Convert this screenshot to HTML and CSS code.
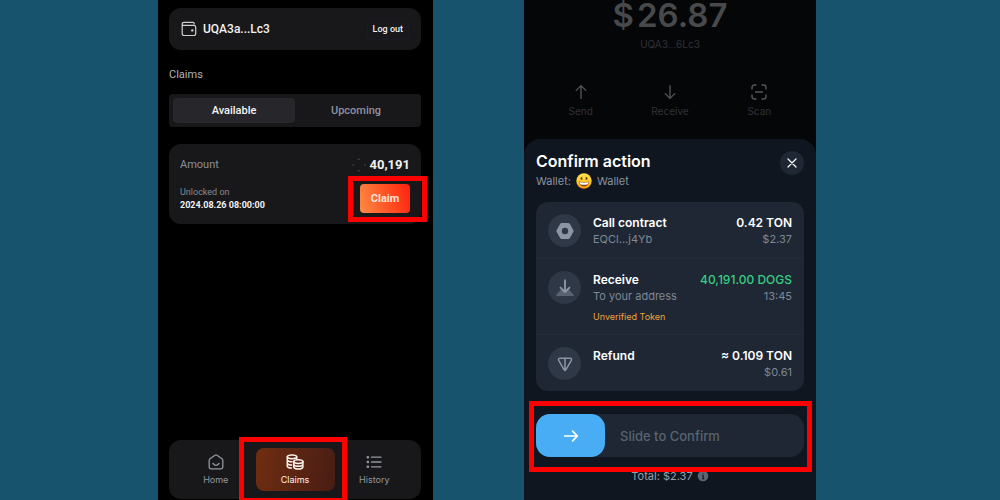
FILE: index.html
```html
<!DOCTYPE html>
<html lang="en">
<head>
<meta charset="utf-8">
<meta name="viewport" content="width=device-width, initial-scale=1">
<title>Claim and confirm</title>
<link rel="stylesheet" href="styles.css">
</head>
<body>
<main class="stage">
  <section class="phone claims-app" aria-label="Claims">
    <header class="wallet-bar">
      <svg class="wallet-icon" viewBox="0 0 16 16" fill="none" stroke="currentColor" stroke-width="1.2" stroke-linecap="round" stroke-linejoin="round"><path d="M13.2 2.9V2.6Q13.2 1.3 11.9 1.3H3Q1.2 1.3 1.2 3.1V12.4Q1.2 14.5 3.3 14.5H12.6Q14.7 14.5 14.7 12.4V6.3Q14.7 4.4 12.7 4.4H2.6Q1.2 4.4 1.2 3.1"/><circle cx="11.3" cy="9.4" r=".6" fill="currentColor"/></svg>
      <span class="wallet-name">UQA3a...Lc3</span>
      <button class="logout" type="button">Log out</button>
    </header>
    <h2 class="section-title">Claims</h2>
    <div class="tabs">
      <button class="tab tab-active" type="button">Available</button>
      <button class="tab" type="button">Upcoming</button>
    </div>
    <article class="claim-card">
      <div class="claim-row">
        <span class="amount-label">Amount</span>
        <span class="amount"><svg class="token" viewBox="0 0 14 14" fill="none" stroke="currentColor" stroke-width="1"><path d="M5.5 1.2H8M5.5 12.8H8M1.2 6V8M12.8 6V8"/></svg>40,191</span>
      </div>
      <div class="claim-row">
        <div class="unlock"><span class="unlock-label">Unlocked on</span><time class="unlock-date">2024.08.26 08:00:00</time></div>
        <div class="marked"><button class="claim-button" type="button">Claim</button><span class="marker marker-claim"></span></div>
      </div>
    </article>
    <nav class="tabbar">
      <a class="nav-item" href="#home">
        <svg class="nav-icon" viewBox="0 0 16 16" fill="none" stroke="currentColor" stroke-width="1.3" stroke-linecap="round" stroke-linejoin="round"><path d="M1.2 6.2Q1.2 5.4 2 4.8L7 1.2Q8 .5 9 1.2L14 4.8Q14.8 5.4 14.8 6.2V13Q14.8 14.8 13 14.8H3Q1.2 14.8 1.2 13ZM5 9.5Q8 13.3 11 9.5"/></svg>Home</a>
      <div class="marked">
        <a class="nav-item nav-active" href="#claims">
          <svg class="nav-icon nav-icon-wide" viewBox="0 0 18 16" fill="none" stroke="currentColor" stroke-width="1.5" stroke-linecap="round"><ellipse cx="6" cy="2.8" rx="4.7" ry="1.9"/><path d="M1.3 2.8V12.4Q1.8 13.8 5.4 14M10.7 2.8V4.8M1.3 6Q2 7.8 6 7.8M1.3 9.2Q2 11 5.6 11"/><ellipse cx="12.3" cy="7.6" rx="4.6" ry="1.9"/><path d="M7.7 7.6V13Q8.4 15.1 12.3 15.1T16.9 13V7.6M7.7 10.4Q8.4 12.3 12.3 12.3T16.9 10.4"/></svg>Claims</a>
        <span class="marker marker-nav"></span>
      </div>
      <a class="nav-item" href="#history">
        <svg class="nav-icon" viewBox="0 0 16 16" fill="none" stroke="currentColor" stroke-width="1.3" stroke-linecap="round"><path d="M5.5 3.2H15M5.5 8H15M5.5 12.8H15"/><path d="M1.7 3.2H2M1.7 8H2M1.7 12.8H2" stroke-width="2.4"/></svg>History</a>
    </nav>
  </section>

  <section class="phone wallet-app" aria-label="Wallet">
    <div class="balance">
      <p class="total-balance"><span class="currency">$</span>26.87</p>
      <p class="address">UQA3...6Lc3</p>
      <div class="quick-actions">
        <button class="quick" type="button"><svg class="quick-icon" viewBox="0 0 16 16" fill="none" stroke="currentColor" stroke-width="1.3" stroke-linecap="round" stroke-linejoin="round"><path d="M8 14.4V1.6M3.2 6.4L8 1.6L12.8 6.4"/></svg>Send</button>
        <button class="quick" type="button"><svg class="quick-icon" viewBox="0 0 16 16" fill="none" stroke="currentColor" stroke-width="1.3" stroke-linecap="round" stroke-linejoin="round"><path d="M8 1.6V14.4M3.2 9.6L8 14.4L12.8 9.6"/></svg>Receive</button>
        <button class="quick" type="button"><svg class="quick-icon" viewBox="0 0 16 16" fill="none" stroke="currentColor" stroke-width="1.4" stroke-linecap="round"><path d="M1 5V3.6Q1 1 3.6 1H5M11 1H12.4Q15 1 15 3.6V5M15 11V12.4Q15 15 12.4 15H11M5 15H3.6Q1 15 1 12.4V11M4.5 8H11.5"/></svg>Scan</button>
      </div>
    </div>

    <div class="sheet">
      <header class="sheet-head">
        <div>
          <h1 class="sheet-title">Confirm action</h1>
          <p class="sheet-wallet">Wallet:
            <svg class="emoji" viewBox="0 0 16 16"><defs><linearGradient id="face" x1="0" y1="0" x2="0" y2="1"><stop offset="0" stop-color="#ffe34f"/><stop offset=".6" stop-color="#ffc526"/><stop offset="1" stop-color="#f08a16"/></linearGradient></defs><circle cx="8" cy="8" r="7.7" fill="url(#face)"/><ellipse cx="5.5" cy="5.5" rx=".9" ry="1.4" fill="#6b3d12"/><ellipse cx="10.5" cy="5.5" rx=".9" ry="1.4" fill="#6b3d12"/><path d="M3 8.5Q8 9.6 13 8.5Q12.5 13.2 8 13.2T3 8.5Z" fill="#7a4315"/><path d="M3.5 9Q8 10 12.5 9L11.8 11.2Q8 12.2 4.2 11.2Z" fill="#fff"/></svg>
            Wallet</p>
        </div>
        <button class="close" type="button" aria-label="Close"><svg class="close-icon" viewBox="0 0 10 10" fill="none" stroke="currentColor" stroke-width="1.2" stroke-linecap="round"><path d="M1 1L9 9M9 1L1 9"/></svg></button>
      </header>

      <ul class="actions">
        <li class="action">
          <span class="action-icon"><svg class="glyph" viewBox="0 0 18 18"><path fill="currentColor" fill-rule="evenodd" d="M5.8 1Q4.7 1 4.1 2L.7 7.9Q.1 9 .7 10.1L4.1 16Q4.7 17 5.8 17H12.2Q13.3 17 13.9 16L17.3 10.1Q17.9 9 17.3 7.9L13.9 2Q13.3 1 12.2 1ZM9 5.8A3.2 3.2 0 1 0 9 12.2A3.2 3.2 0 1 0 9 5.8Z"/></svg></span>
          <div class="action-main"><span class="name">Call contract</span><span class="detail">EQCl...j4Yb</span></div>
          <div class="action-value"><span class="name">0.42 TON</span><span class="detail">$2.37</span></div>
        </li>
        <li class="action">
          <span class="action-icon"><svg class="glyph" viewBox="0 0 18 18" fill="none"><path d="M5 10.5L0 16.2Q0 17 1 17H17Q18 17 18 16.2L13 10.5Z" fill="#59636f"/><path d="M9 1.2V12.8M4.5 8.6L9 13L13.5 8.6" stroke="currentColor" stroke-width="1.9" stroke-linecap="round" stroke-linejoin="round"/></svg></span>
          <div class="action-main"><span class="name">Receive</span><span class="detail">To your address</span><span class="warning">Unverified Token</span></div>
          <div class="action-value"><span class="name incoming">40,191.00 DOGS</span><span class="detail">13:45</span></div>
        </li>
        <li class="action">
          <span class="action-icon"><svg class="glyph" viewBox="0 0 18 18" fill="none" stroke="currentColor" stroke-width="1.5" stroke-linejoin="round"><path d="M4.2 3.2H13.8Q16.4 3.2 15.2 5.6L9.8 14.9Q9 16.1 8.2 14.9L2.8 5.6Q1.6 3.2 4.2 3.2ZM9 3.2V15.4"/></svg></span>
          <div class="action-main"><span class="name">Refund</span></div>
          <div class="action-value"><span class="name">≈ 0.109 TON</span><span class="detail">$0.61</span></div>
        </li>
      </ul>

      <div class="slide">
        <input class="slide-range" id="confirm" type="range" min="0" max="100" value="0">
        <label class="slide-label" for="confirm">Slide to Confirm</label>
        <span class="slide-arrow"><svg class="arrow-icon" viewBox="0 0 16 16" fill="none" stroke="currentColor" stroke-width="1.7" stroke-linecap="round" stroke-linejoin="round"><path d="M1.6 8H14.4M9.6 3.2L14.4 8L9.6 12.8"/></svg></span>
        <span class="marker marker-slide"></span>
      </div>
      <p class="total">Total: $2.37 <svg class="info" viewBox="0 0 12 12"><circle cx="6" cy="6" r="5.3" fill="#5c6672"/><path d="M6 3V3.4M5.2 5.3H6.2V8.6M5 8.7H7.3" stroke="#10161f" stroke-width="1.1" fill="none"/></svg></p>
    </div>
  </section>
</main>
</body>
</html>
```
FILE: styles.css
```css
* { box-sizing: border-box; }
body { margin: 0; background: #17536d; font-family: Roboto, "Liberation Sans", sans-serif; }
h1, h2, p, ul { margin: 0; padding: 0; }
button { border: 0; padding: 0; background: none; font: inherit; color: inherit; cursor: pointer; }
a { color: inherit; text-decoration: none; }
svg { display: block; flex: none; }

.stage {
  display: grid;
  grid-template-columns: 275fr 292fr;
  column-gap: 9.1vw;
  padding: 0 18.4vw 0 15.8vw;
  height: 100vh;
  min-height: 500px;
  overflow: hidden;
}
.phone { display: flex; flex-direction: column; min-width: 0; }

.marked { position: relative; }
.marker { position: absolute; border: 5px solid #fe0000; pointer-events: none; z-index: 2; }
.marker-claim { inset: -8px -17px -9px -12px; }
.marker-nav { inset: -11px -12px -12px -17px; }
.marker-slide { inset: -13px -8px -15px -7px; }

/* Claims app */
.claims-app { background: #000; color: #f2f2f3; padding: 8px 12px 0 11px; }
.wallet-bar { display: flex; align-items: center; gap: 6px; padding: 8px 12px; min-height: 42px; border-radius: 12px; background: #18181a; }
.wallet-icon { width: 16px; height: 16px; color: #d0d0d2; }
.wallet-name { flex: 1; font-size: 12px; font-weight: 500; line-height: 16px; }
.logout { padding: 4px 5px; border: 1px solid #1b1a24; border-radius: 4px; font-size: 9px; line-height: 12px; font-weight: 500; }
.section-title { margin-top: 17px; font-size: 11px; line-height: 16px; font-weight: 400; color: #b4b4b6; }
.tabs { display: grid; grid-template-columns: 1fr 1fr; margin-top: 11px; padding: 4px; border-radius: 4px; background: #18181a; }
.tab { border-radius: 4px; font-size: 11px; line-height: 25px; font-weight: 500; color: #8d92a3; }
.tab-active { background: #26262b; color: #f5f5f6; }
.claim-card { margin-top: 17px; padding: 13px 11px 11px; border-radius: 12px; background: #18181a; }
.claim-row { display: flex; justify-content: space-between; align-items: center; }
.claim-row + .claim-row { margin-top: 11px; }
.amount-label { font-size: 11px; line-height: 16px; color: #8b909b; }
.amount { display: flex; align-items: center; gap: 4px; font-size: 13px; line-height: 16px; font-weight: 700; }
.token { width: 14px; height: 14px; color: #44464b; }
.unlock { display: flex; flex-direction: column; font-size: 9px; line-height: 13px; }
.unlock-label { color: #858a94; }
.unlock-date { font-weight: 700; }
.claim-button { display: block; width: 50px; border-radius: 4px; background: linear-gradient(75deg, #fc8b45, #ff4b20 60%, #ff2112); color: #fde3d8; font-size: 11px; line-height: 29px; font-weight: 700; }
.tabbar { display: grid; grid-template-columns: 1fr 79px 1fr; margin-top: auto; margin-bottom: 1px; padding: 8px 7px; border-radius: 12px; background: #18181a; font-family: Inter, sans-serif; }
.nav-item { display: flex; flex-direction: column; align-items: center; gap: 3px; padding: 6px 0 5px; font-size: 9px; line-height: 13px; color: #9297a1; }
.nav-icon { width: 16px; height: 16px; }
.nav-icon-wide { width: 18px; }
.nav-active { border-radius: 8px; background: linear-gradient(100deg, #702d11, #481d14); color: #fff3ec; }

/* Wallet app */
.wallet-app { background: #050608; color: #fff; font-family: Inter, "Open Sans", sans-serif; }
.balance { flex: none; display: flex; flex-direction: column; height: 139px; color: #303236; }
.total-balance { text-align: center; font-size: 33px; line-height: 30px; font-weight: 600; color: #48494b; }
.currency { margin-right: 3px; }
.address { margin-top: 6px; text-align: center; font-size: 10px; line-height: 16px; }
.quick-actions { display: grid; grid-template-columns: repeat(3, 1fr); margin-top: 32px; padding: 0 12px; }
.quick { display: flex; flex-direction: column; align-items: center; gap: 4px; font-size: 10px; line-height: 14px; }
.quick-icon { width: 16px; height: 16px; color: #55575a; }

.sheet { flex: 1; padding: 12px 12px 0; border-radius: 16px 16px 0 0; background: #10161f; }
.sheet-head { display: flex; justify-content: space-between; align-items: flex-start; }
.sheet-title { font-size: 16px; line-height: 20px; font-weight: 600; }
.sheet-wallet { display: flex; align-items: center; gap: 5px; font-size: 11px; line-height: 20px; color: #8a939f; }
.emoji { width: 16px; height: 16px; }
.close { display: grid; place-items: center; width: 24px; height: 24px; border-radius: 50%; background: #1e2733; }
.close-icon { width: 10px; height: 10px; }

.actions { list-style: none; margin-top: 11px; border-radius: 12px; background: #1e2733; }
.action { display: flex; gap: 12px; padding: 12px 12px 10px; }
.action + .action { border-top: 1px solid #222b37; }
.action-icon { display: grid; place-items: center; flex: none; width: 33px; height: 33px; border-radius: 50%; background: #2e3846; color: #8b95a4; }
.glyph { width: 18px; height: 18px; }
.action-main, .action-value { display: flex; flex-direction: column; }
.action-main { flex: 1; }
.action-value { align-items: flex-end; }
.name { font-size: 12px; line-height: 17px; font-weight: 600; }
.detail { font-size: 11px; line-height: 17px; color: #7e8895; }
.warning { margin-top: 4px; font-size: 9px; line-height: 15px; color: #f0a33c; }
.incoming { color: #39cc83; font-weight: 500; }

.slide { position: relative; display: grid; margin-top: 23px; }
.slide > * { grid-area: 1 / 1; }
.slide-range { appearance: none; width: 100%; height: 43px; margin: 0; border-radius: 14px; background: #1e2733; cursor: pointer; }
.slide-range::-webkit-slider-thumb { appearance: none; width: 69px; height: 43px; border-radius: 14px; background: #48adf5; }
.slide-label { place-self: center start; padding-left: 84px; font-size: 13px; line-height: 16px; font-weight: 500; color: #59636f; pointer-events: none; }
.slide-arrow { place-self: center start; display: grid; place-items: center; width: 69px; pointer-events: none; }
.arrow-icon { width: 16px; height: 16px; }
.slide > .marker { grid-area: auto; }
.total { display: flex; justify-content: center; align-items: center; gap: 4px; margin-top: 11px; font-size: 11px; line-height: 16px; color: #98a0aa; }
.info { width: 12px; height: 12px; }
```
